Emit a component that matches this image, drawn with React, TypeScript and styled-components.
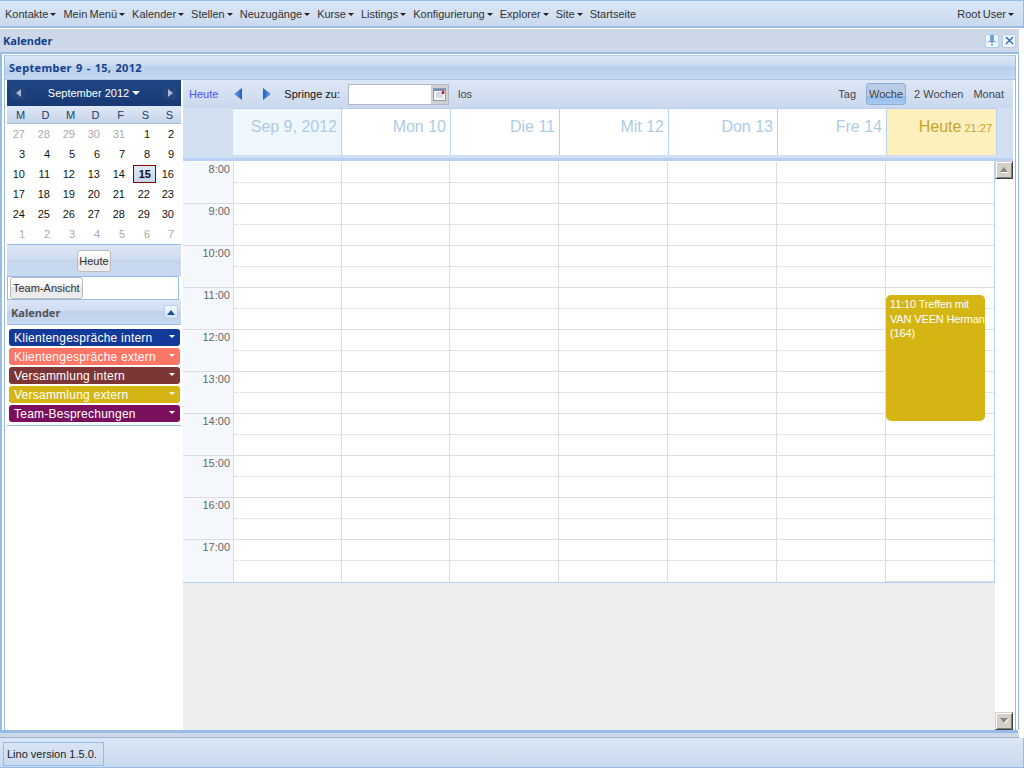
import styled, { createGlobalStyle } from "styled-components";

const GlobalStyle = createGlobalStyle`
  html, body {
    margin: 0;
    padding: 0;
    background: #fff;
    font-family: "Liberation Sans", Arial, sans-serif;
    font-size: 11px;
    color: #222;
  }
`;

const Page = styled.div`
  width: 1024px;
  height: 768px;
  display: flex;
  flex-direction: column;
  overflow: hidden;
`;

// top menu
const MenuBar = styled.div`
  height: 25px;
  flex: none;
  display: flex;
  align-items: center;
  padding: 0 9px 0 5px;
  border: 1px solid #99bbe8;
  border-bottom-width: 2px;
  border-left: none;
  background: linear-gradient(#dbe7f6, #c9d9ee);
`;

const MenuItem = styled.div<{ $plain?: boolean; $last?: boolean }>`
  display: flex;
  align-items: center;
  gap: 2px;
  margin-right: ${(p) => (p.$last ? "0" : "7px")};
  color: #333;
  white-space: nowrap;
  word-spacing: -0.8px;
  &::after {
    content: "";
    display: ${(p) => (p.$plain ? "none" : "block")};
    border: 3px solid transparent;
    border-top: 3px solid #222;
    border-bottom: none;
    margin-top: 1px;
  }
`;

const Spacer = styled.div`
  flex: 1;
`;

// window title
const WindowHeader = styled.div`
  height: 23px;
  flex: none;
  margin-top: 1px;
  margin-right: 5px;
  display: flex;
  align-items: center;
  gap: 3px;
  padding: 0 3px;
  background: #ccd8e7;
  border-bottom: 2px solid #99bbe8;
`;

const WindowTitle = styled.div`
  flex: 1;
  font-family: "Noto Sans", sans-serif;
  font-weight: bold;
  color: #15428b;
  font-size: 11px;
`;

const ToolButton = styled.div`
  width: 12px;
  height: 12px;
  border: 1px solid #b5cdea;
  border-radius: 2px;
  background: #f0f6fd;
  display: flex;
  align-items: center;
  justify-content: center;
`;

const Frame = styled.div`
  flex: 1;
  min-height: 0;
  display: flex;
  flex-direction: column;
  margin: 0 5px 0 0;
  padding: 0 2px;
  border-left: 2px solid #99bbe8;
  border-right: 1px solid #99bbe8;
`;

const CalendarPanel = styled.div`
  flex: 1;
  min-height: 0;
  display: flex;
  flex-direction: column;
  border-left: 1px solid #99bbe8;
  border-right: 1px solid #99bbe8;
  margin-top: 1px;
`;

const PanelTitle = styled.div`
  height: 23px;
  flex: none;
  display: flex;
  align-items: center;
  padding-left: 4px;
  font-family: "Noto Sans", sans-serif;
  font-weight: bold;
  font-size: 11px;
  letter-spacing: 0.3px;
  word-spacing: 1px;
  color: #15428b;
  background: linear-gradient(#dde8f7 0, #c8d9f0 45%, #b9cfec 46%, #c6d8f0 100%);
  border-top: 1px solid #b5cdea;
  border-bottom: 1px solid #a9c3ea;
`;

const PanelBody = styled.div`
  flex: 1;
  min-height: 0;
  display: flex;
  padding: 0 2px;
`;

// left column
const Sidebar = styled.div`
  width: 174px;
  flex: none;
  margin-right: 2px;
  display: flex;
  flex-direction: column;
  background: #fff;
`;

const PickerHeader = styled.div`
  height: 26px;
  flex: none;
  display: flex;
  align-items: center;
  justify-content: space-between;
  padding: 0 4px;
  color: #fff;
  background: linear-gradient(#1e4585, #183a75);
`;

const PickerNav = styled.div`
  width: 14px;
  height: 13px;
  background: #24467f;
  display: flex;
  align-items: center;
  justify-content: center;
`;

const MonthLabel = styled.div`
  display: flex;
  align-items: center;
  gap: 3px;
  &::after {
    content: "";
    border: 4px solid transparent;
    border-top: 4px solid #fff;
    border-bottom: none;
  }
`;

const WeekdayRow = styled.div`
  height: 17px;
  flex: none;
  display: grid;
  grid-template-columns: repeat(6, 25px) 1fr;
  align-items: center;
  text-align: center;
  padding-left: 1px;
  color: #233d6e;
  background: linear-gradient(#dfe8f6, #c6d5ea);
  border-bottom: 1px solid #a3bad9;
`;

const DayGrid = styled.div`
  height: 120px;
  flex: none;
  display: grid;
  grid-template-columns: repeat(6, 25px) 1fr;
  grid-auto-rows: 20px;
`;

const DayCell = styled.div<{ $muted?: boolean; $selected?: boolean }>`
  display: flex;
  align-items: center;
  justify-content: flex-end;
  padding-right: 7px;
  font-size: 11px;
  color: ${(p) => (p.$muted ? "#aaa" : "#111")};
  font-weight: ${(p) => (p.$selected ? "bold" : "normal")};
  ${(p) =>
    p.$selected &&
    `
    box-sizing: border-box;
    width: 23px;
    margin: 1px 0 1px 1px;
    padding-right: 4px;
    border: 1px solid #8b0000;
    background: linear-gradient(#dfe8f6, #c6d5ea);
  `}
`;

const PickerFooter = styled.div`
  height: 31px;
  flex: none;
  display: flex;
  align-items: center;
  justify-content: center;
  border-top: 1px solid #99bbe8;
  background: linear-gradient(#dbe6f5 0, #d0def1 45%, #c5d6ed 46%, #c9d9ee 100%);
`;

const GrayButton = styled.div<{ $wide?: boolean }>`
  display: flex;
  align-items: center;
  height: 20px;
  padding: 0 ${(p) => (p.$wide ? "2px" : "1px")};
  border: 1px solid #bbb;
  border-radius: 3px;
  color: #333;
  background: linear-gradient(#fff 0, #f4f4f4 45%, #e4e4e4 46%, #efefef 100%);
`;

const TeamBox = styled.div`
  height: 24px;
  flex: none;
  display: flex;
  align-items: center;
  padding-left: 2px;
  margin-right: 2px;
  background: #fff;
  border: 1px solid #99bbe8;
  box-sizing: border-box;
`;

const SectionHeader = styled.div`
  height: 24px;
  flex: none;
  display: flex;
  align-items: center;
  justify-content: space-between;
  padding: 0 3px 0 4px;
  font-family: "Noto Sans", sans-serif;
  font-weight: bold;
  color: #555;
  background: linear-gradient(#dbe6f5 0, #cfdcf0 45%, #bfd2ec 46%, #c9d9ee 100%);
  border-bottom: 1px solid #99bbe8;
`;

const CollapseButton = styled(ToolButton)`
  background: linear-gradient(#f4f8fe, #cfe0f5);
`;

const CalendarList = styled.div`
  flex: none;
  display: flex;
  flex-direction: column;
  gap: 2px;
  padding: 4px 1px 3px 2px;
  border-bottom: 1px solid #99bbe8;
`;

const CalendarChip = styled.div<{ $color: string }>`
  height: 17px;
  display: flex;
  align-items: center;
  justify-content: space-between;
  padding: 0 5px;
  border-radius: 3px;
  color: #fff;
  font-size: 12px;
  letter-spacing: 0.02em;
  background: ${(p) => p.$color};
  &::after {
    content: "";
    border: 3px solid transparent;
    border-top: 3px solid #fff;
    border-bottom: none;
    margin-bottom: 2px;
  }
`;

// main area
const Main = styled.div`
  flex: 1;
  min-width: 0;
  display: flex;
  flex-direction: column;
  background: #fff;
`;

const Toolbar = styled.div`
  height: 28px;
  flex: none;
  display: flex;
  align-items: center;
  padding: 0 7px 0 6px;
  background: linear-gradient(#dce7f6, #cad9ee);
`;

const TodayLink = styled.div`
  color: #5050f0;
  margin-right: 16px;
`;

const NavArrow = styled.div<{ $after: number }>`
  width: 8px;
  height: 12px;
  margin-right: ${(p) => p.$after}px;
  display: flex;
`;

const JumpLabel = styled.div`
  color: #111;
  margin-right: 8px;
`;

const DateField = styled.div`
  width: 101px;
  height: 21px;
  display: flex;
  justify-content: flex-end;
  background: #fff;
  border: 1px solid #b5b8c8;
  box-sizing: border-box;
`;

const DateTrigger = styled.div`
  width: 17px;
  background: #d0d0d0;
  display: flex;
  align-items: center;
  justify-content: center;
`;

const GoLabel = styled.div`
  color: #444;
  margin-left: 9px;
`;

const ViewButton = styled.div<{ $active?: boolean; $gap: number }>`
  height: 20px;
  display: flex;
  align-items: center;
  padding: 0 2px;
  margin-left: ${(p) => p.$gap}px;
  color: #444;
  ${(p) =>
    p.$active &&
    `
    border: 1px solid #8fadd8;
    border-radius: 3px;
    background: linear-gradient(#b9cde6 0, #b9cde6 60%, #91bdf0 61%, #a8c8f0 100%);
  `}
`;

const HeaderStrip = styled.div`
  flex: none;
  height: 53px;
  display: grid;
  grid-template-columns: 50px repeat(6, 109px) 110px 1fr;
  background: #d2dff0;
  border-bottom: 3px solid #b9d0f5;
  box-sizing: border-box;
`;

const DayHeader = styled.div<{ $kind?: "first" | "today" }>`
  height: 47px;
  display: flex;
  align-items: flex-start;
  justify-content: flex-end;
  gap: 3px;
  padding: 9px 4px 0 0;
  font-size: 16px;
  color: ${(p) => (p.$kind === "today" ? "#c5a52a" : "#aecbe4")};
  background: ${(p) =>
    p.$kind === "first" ? "#eef7fb" : p.$kind === "today" ? "#fdf0bd" : "#fff"};
  border-right: 1px solid #b9d0f5;
  border-top: 1px solid #b9d0f5;
  box-sizing: border-box;
`;

const Clock = styled.span`
  font-size: 11px;
  margin-top: 4px;
`;

const ScrollArea = styled.div`
  flex: 1;
  min-height: 0;
  display: flex;
`;

const GridPane = styled.div`
  flex: 1;
  min-width: 0;
  background: #ededed;
`;

const WeekGrid = styled.div`
  display: grid;
  grid-template-columns: 50px 108px 108px 109px 109px 109px 109px 110px;
  border-top: 1px solid #fff;
  border-bottom: 1px solid #b9d0f5;
  background: #fff;
`;

const TimeGutter = styled.div`
  background: #f4f8fc;
`;

const TimeSlot = styled.div`
  height: 42px;
  box-sizing: border-box;
  padding: 1px 3px 0 0;
  text-align: right;
  font-size: 11px;
  color: #666;
  border-bottom: 1px solid #ddd;
  &:last-child {
    border-bottom: none;
  }
`;

const DayColumn = styled.div`
  position: relative;
  border-left: 1px solid #ddd;
  &:last-child {
    border-right: 1px solid #b9d0f5;
  }
`;

const HalfHours = styled.div`
  height: 42px;
  box-sizing: border-box;
  border-bottom: 1px solid #ddd;
  position: relative;
  &:last-child {
    border-bottom: none;
  }
  &::after {
    content: "";
    position: absolute;
    left: 0;
    right: 0;
    top: 20px;
    border-top: 1px dotted #d4d4d4;
  }
`;

const EventBlock = styled.div`
  position: absolute;
  left: 0;
  top: 133px;
  width: 99px;
  height: 126px;
  box-sizing: border-box;
  padding: 2px 0 0 4px;
  border-radius: 5px;
  background: #d4b514;
  color: #fff;
  font-size: 11px;
  line-height: 14.5px;
  letter-spacing: -0.15px;
  z-index: 1;
`;

const EventLine = styled.div`
  white-space: nowrap;
`;

const Scrollbar = styled.div`
  width: 18px;
  flex: none;
  display: flex;
  flex-direction: column;
  justify-content: space-between;
  background: #fff;
`;

const ScrollButton = styled.div`
  width: 18px;
  height: 18px;
  box-sizing: border-box;
  background: #d4d0c8;
  border: 1px solid;
  border-color: #d4d0c8 #404040 #404040 #d4d0c8;
  box-shadow: inset 1px 1px #fff, inset -1px -1px #808080;
  display: flex;
  align-items: center;
  justify-content: center;
`;

// footer
const BottomLine = styled.div`
  flex: none;
  height: 3px;
  background: #99bbe8;
  margin-right: 6px;
`;

const BottomStrip = styled.div`
  flex: none;
  height: 4px;
  margin-right: 5px;
  background: #ccd8e7;
  border-bottom: 1px solid #9eb2cb;
`;

const StatusBar = styled.div`
  height: 30px;
  flex: none;
  display: flex;
  align-items: stretch;
  padding: 4px 0 0 3px;
  box-sizing: border-box;
  border-right: 1px solid #99bbe8;
  border-bottom: 1px solid #99bbe8;
  background: linear-gradient(#dbe7f6, #c9d9ee);
`;

const StatusPanel = styled.div`
  display: flex;
  align-items: center;
  padding: 0 6px 0 3px;
  border: 1px solid #99bbe8;
  color: #222;
  margin-bottom: 1px;
`;

const MENUS = [
  "Kontakte",
  "Mein Menü",
  "Kalender",
  "Stellen",
  "Neuzugänge",
  "Kurse",
  "Listings",
  "Konfigurierung",
  "Explorer",
  "Site",
];

const WEEKDAYS = ["M", "D", "M", "D", "F", "S", "S"];

const DAYS = [
  27, 28, 29, 30, 31, 1, 2, 3, 4, 5, 6, 7, 8, 9, 10, 11, 12, 13, 14, 15, 16, 17, 18, 19, 20, 21,
  22, 23, 24, 25, 26, 27, 28, 29, 30, 1, 2, 3, 4, 5, 6, 7,
];

const CALENDARS = [
  { name: "Klientengespräche intern", color: "#143a99" },
  { name: "Klientengespräche extern", color: "#ff7566" },
  { name: "Versammlung intern", color: "#7c3636" },
  { name: "Versammlung extern", color: "#d4b514" },
  { name: "Team-Besprechungen", color: "#7a0f5e" },
];

const HOURS = ["8:00", "9:00", "10:00", "11:00", "12:00", "13:00", "14:00", "15:00", "16:00", "17:00"];

const COLUMNS = [0, 1, 2, 3, 4, 5, 6];

const NavTriangle = ({ dir }: { dir: "left" | "right" }) => (
  <svg width="8" height="12" viewBox="0 0 8 12">
    <defs>
      <linearGradient id={`nav-${dir}`} x1="0" x2="1" y1="0" y2="0">
        <stop offset="0" stopColor={dir === "left" ? "#6ea3ee" : "#1f5fc0"} />
        <stop offset="1" stopColor={dir === "left" ? "#1f5fc0" : "#6ea3ee"} />
      </linearGradient>
    </defs>
    <path d={dir === "left" ? "M8 0V12L0 6Z" : "M0 0V12L8 6Z"} fill={`url(#nav-${dir})`} />
  </svg>
);

function App() {
  return (
    <Page>
      <GlobalStyle />
      <MenuBar>
        {MENUS.map((menu) => (
          <MenuItem key={menu}>{menu}</MenuItem>
        ))}
        <MenuItem $plain>Startseite</MenuItem>
        <Spacer />
        <MenuItem $last>Root User</MenuItem>
      </MenuBar>

      <WindowHeader>
        <WindowTitle>Kalender</WindowTitle>
        <ToolButton>
          <svg width="8" height="11" viewBox="0 0 8 11">
            <path d="M2 0H6V6H8V7H4.6V11H3.4V7H0V6H2Z" fill="#6f9fdc" />
          </svg>
        </ToolButton>
        <ToolButton>
          <svg width="9" height="9" viewBox="0 0 9 9">
            <path d="M1 1L8 8M8 1L1 8" stroke="#2b5ea8" strokeWidth="1.2" />
          </svg>
        </ToolButton>
      </WindowHeader>

      <Frame>
        <CalendarPanel>
          <PanelTitle>September 9 - 15, 2012</PanelTitle>
          <PanelBody>
            <Sidebar>
              <PickerHeader>
                <PickerNav>
                  <svg width="5" height="8" viewBox="0 0 5 8">
                    <path d="M5 0V8L0 4Z" fill="#a9b8d0" />
                  </svg>
                </PickerNav>
                <MonthLabel>September 2012</MonthLabel>
                <PickerNav>
                  <svg width="5" height="8" viewBox="0 0 5 8">
                    <path d="M0 0V8L5 4Z" fill="#a9b8d0" />
                  </svg>
                </PickerNav>
              </PickerHeader>
              <WeekdayRow>
                {WEEKDAYS.map((day, index) => (
                  <div key={index}>{day}</div>
                ))}
              </WeekdayRow>
              <DayGrid>
                {DAYS.map((day, index) => (
                  <DayCell
                    key={index}
                    $muted={index < 5 || index >= 35}
                    $selected={index === 19}
                  >
                    {day}
                  </DayCell>
                ))}
              </DayGrid>
              <PickerFooter>
                <GrayButton>Heute</GrayButton>
              </PickerFooter>
              <TeamBox>
                <GrayButton $wide>Team-Ansicht</GrayButton>
              </TeamBox>
              <SectionHeader>
                Kalender
                <CollapseButton>
                  <svg width="8" height="5" viewBox="0 0 8 5">
                    <path d="M4 0L8 5H0Z" fill="#1f4e9c" />
                  </svg>
                </CollapseButton>
              </SectionHeader>
              <CalendarList>
                {CALENDARS.map((calendar) => (
                  <CalendarChip key={calendar.name} $color={calendar.color}>
                    {calendar.name}
                  </CalendarChip>
                ))}
              </CalendarList>
            </Sidebar>

            <Main>
              <Toolbar>
                <TodayLink>Heute</TodayLink>
                <NavArrow $after={21}>
                  <NavTriangle dir="left" />
                </NavArrow>
                <NavArrow $after={13}>
                  <NavTriangle dir="right" />
                </NavArrow>
                <JumpLabel>Springe zu:</JumpLabel>
                <DateField>
                  <DateTrigger>
                    <svg width="13" height="13" viewBox="0 0 13 13">
                      <rect x="0.5" y="0.5" width="12" height="12" fill="#f4f4f8" stroke="#8c9ab5" />
                      <rect x="1" y="1" width="11" height="2" fill="#7d8fb5" />
                      <path d="M3 5H8M3 7H10M3 9H10" stroke="#b5c0d5" />
                      <circle cx="10" cy="4.5" r="1.5" fill="#a01818" />
                    </svg>
                  </DateTrigger>
                </DateField>
                <GoLabel>los</GoLabel>
                <Spacer />
                <ViewButton $gap={0}>Tag</ViewButton>
                <ViewButton $active $gap={8}>
                  Woche
                </ViewButton>
                <ViewButton $gap={6}>2 Wochen</ViewButton>
                <ViewButton $gap={6}>Monat</ViewButton>
              </Toolbar>

              <HeaderStrip>
                <div />
                <DayHeader $kind="first">Sep 9, 2012</DayHeader>
                <DayHeader>Mon 10</DayHeader>
                <DayHeader>Die 11</DayHeader>
                <DayHeader>Mit 12</DayHeader>
                <DayHeader>Don 13</DayHeader>
                <DayHeader>Fre 14</DayHeader>
                <DayHeader $kind="today">
                  Heute <Clock>21:27</Clock>
                </DayHeader>
              </HeaderStrip>

              <ScrollArea>
                <GridPane>
                  <WeekGrid>
                    <TimeGutter>
                      {HOURS.map((hour) => (
                        <TimeSlot key={hour}>{hour}</TimeSlot>
                      ))}
                    </TimeGutter>
                    {COLUMNS.map((column) => (
                      <DayColumn key={column}>
                        {HOURS.map((hour) => (
                          <HalfHours key={hour} />
                        ))}
                        {column === 6 && (
                          <EventBlock>
                            <EventLine>11:10 Treffen mit</EventLine>
                            <EventLine>VAN VEEN Herman</EventLine>
                            <EventLine>(164)</EventLine>
                          </EventBlock>
                        )}
                      </DayColumn>
                    ))}
                  </WeekGrid>
                </GridPane>
                <Scrollbar>
                  <ScrollButton>
                    <svg width="9" height="6" viewBox="0 0 9 6">
                      <path d="M5 1L9 6H1Z" fill="#fff" />
                      <path d="M4 0L8 5H0Z" fill="#888" />
                    </svg>
                  </ScrollButton>
                  <ScrollButton>
                    <svg width="9" height="6" viewBox="0 0 9 6">
                      <path d="M1 1H9L5 6Z" fill="#fff" />
                      <path d="M0 0H8L4 5Z" fill="#888" />
                    </svg>
                  </ScrollButton>
                </Scrollbar>
              </ScrollArea>
            </Main>
          </PanelBody>
        </CalendarPanel>
      </Frame>

      <BottomLine />
      <BottomStrip />
      <StatusBar>
        <StatusPanel>Lino version 1.5.0.</StatusPanel>
      </StatusBar>
    </Page>
  );
}

export default App;
